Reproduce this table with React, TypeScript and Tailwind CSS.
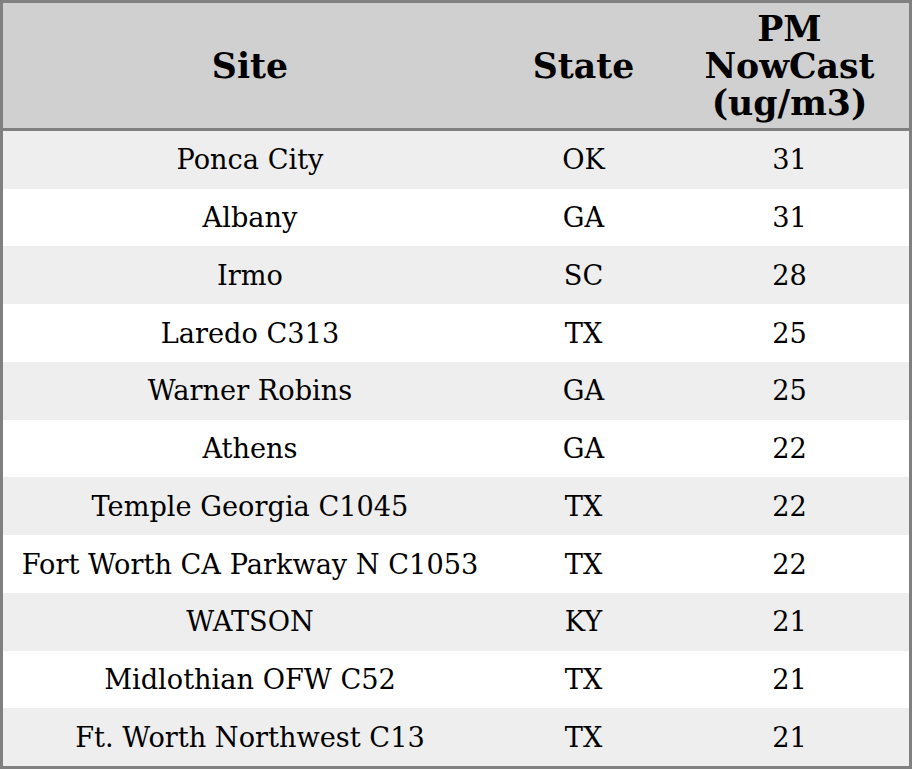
const rows: [string, string, string][] = [
  ["Ponca City", "OK", "31"],
  ["Albany", "GA", "31"],
  ["Irmo", "SC", "28"],
  ["Laredo C313", "TX", "25"],
  ["Warner Robins", "GA", "25"],
  ["Athens", "GA", "22"],
  ["Temple Georgia C1045", "TX", "22"],
  ["Fort Worth CA Parkway N C1053", "TX", "22"],
  ["WATSON", "KY", "21"],
  ["Midlothian OFW C52", "TX", "21"],
  ["Ft. Worth Northwest C13", "TX", "21"],
];

export default function App() {
  return (
    <div className="w-[912px] h-[769px] flex flex-col border-[3px] border-[#808080] bg-white font-['DejaVu_Serif',serif] text-black">
      {/* header */}
      <div className="h-[128px] shrink-0 grid grid-cols-[494px_173px_1fr] items-center bg-[#d0d0d0] border-b-[3px] border-[#808080] text-[34.67px] leading-[37px] font-bold text-center">
        <div>Site</div>
        <div>State</div>
        <div>
          PM
          <br />
          NowCast
          <br />
          (ug/m3)
        </div>
      </div>
      {/* rows */}
      <div className="flex-1 flex flex-col">
        {rows.map(([site, state, pm], i) => (
          <div
            key={i}
            className={`flex-1 grid grid-cols-[494px_173px_1fr] items-center text-center text-[27.2px] leading-[31px] ${
              i % 2 === 0 ? "bg-[#eeeeee]" : "bg-white"
            }`}
          >
            <div className="whitespace-nowrap">{site}</div>
            <div>{state}</div>
            <div>{pm}</div>
          </div>
        ))}
      </div>
    </div>
  );
}
